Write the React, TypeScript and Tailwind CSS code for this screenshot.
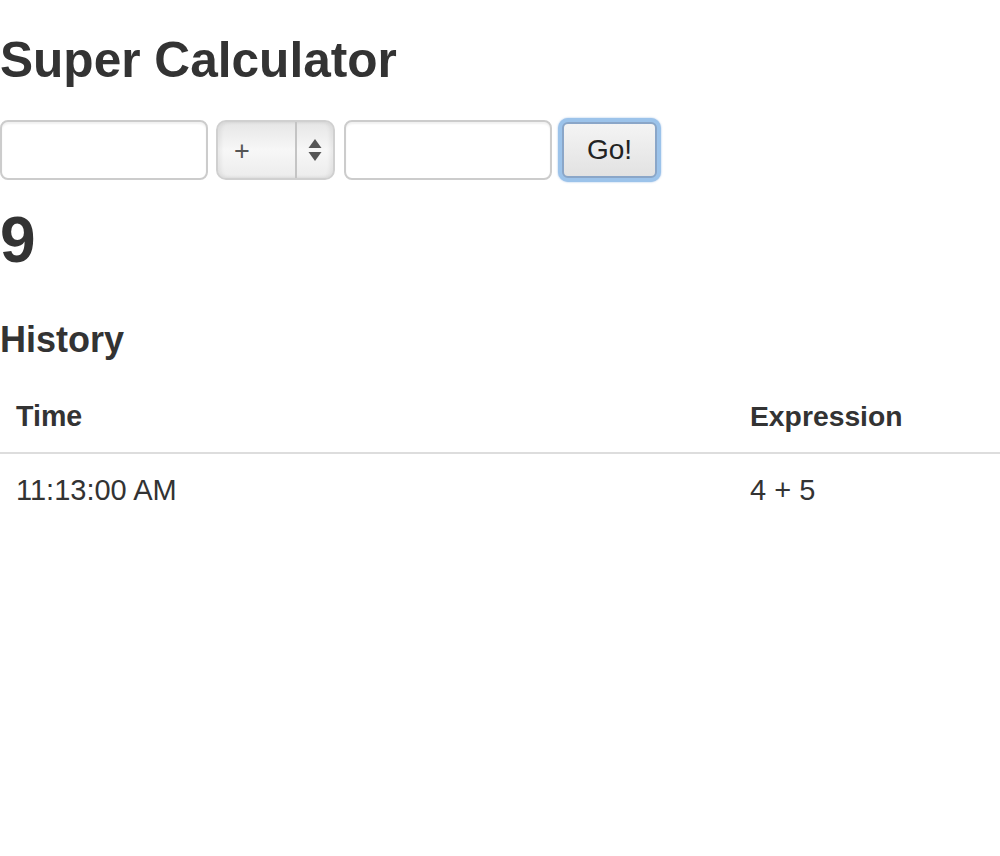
import React from 'react'

const history = [
  { time: '11:13:00 AM', expression: '4 + 5' }
]

export default function App() {
  return (
    <div className="min-h-[856px] w-[1000px] bg-white text-[#333] font-['Liberation_Sans',Arial,sans-serif]">
      {/* Title */}
      <h3 className="pt-[20px] text-[49.6px] leading-[80px] font-bold">Super Calculator</h3>

      {/* Form row */}
      <div className="mt-[20px] flex items-center h-[60px]">
        <div className="w-[208px] h-[60px] rounded-[8px] border-2 border-[#cccccc] bg-white shadow-[inset_0_2px_2px_rgba(0,0,0,0.06)]" />

        <div className="ml-[8px] w-[119px] h-[60px] rounded-[10px] border-2 border-[#d0d0d0] bg-gradient-to-b from-[#e6e6e6] via-[#f7f7f7] to-[#ececec] flex overflow-hidden shadow-[inset_3px_0_4px_rgba(0,0,0,0.06),inset_-3px_0_4px_rgba(0,0,0,0.06)]">
          <div className="flex-1 flex items-center pl-[16px] pt-[2px] text-[27px] font-light text-[#555]">+</div>
          <div className="w-[2px] bg-[#c4c4c4]" />
          <div className="w-[36px] flex items-center justify-center">
            <svg width="16" height="28" viewBox="0 0 16 28">
              <path d="M8 3 L14.5 12 L1.5 12 Z" fill="#555" />
              <path d="M1.5 16 L14.5 16 L8 25 Z" fill="#555" />
            </svg>
          </div>
        </div>

        <div className="ml-[9px] w-[208px] h-[60px] rounded-[8px] border-2 border-[#cccccc] bg-white shadow-[inset_0_2px_2px_rgba(0,0,0,0.06)]" />

        <div className="ml-[6px] w-[103px] h-[64px] rounded-[10px] bg-[#9cc3ea] p-[4px] shadow-[0_0_2px_rgba(80,140,210,0.6)]">
          <button className="w-full h-full rounded-[6px] border-2 border-[#8aa6c8] bg-gradient-to-b from-[#f4f4f4] to-[#e2e2e2] text-[28px] text-[#222] leading-none">
            Go!
          </button>
        </div>
      </div>

      {/* Result */}
      <h2 className="mt-[20px] text-[64px] leading-[80px] font-bold">9</h2>

      {/* History */}
      <h4 className="mt-[40px] text-[36px] leading-[40px] font-bold">History</h4>

      <table className="mt-[20px] w-[1000px] border-collapse leading-[40px]">
        <thead>
          <tr>
            <th className="w-[734px] px-[16px] py-[16px] text-left text-[28.6px] font-bold">Time</th>
            <th className="px-[16px] py-[16px] text-left text-[28.3px] font-bold">Expression</th>
          </tr>
        </thead>
        <tbody>
          {history.map((row) => (
            <tr key={row.time} className="border-t-2 border-[#dddddd]">
              <td className="px-[16px] py-[16px] text-[29px]">{row.time}</td>
              <td className="px-[16px] py-[16px] text-[29px]">{row.expression}</td>
            </tr>
          ))}
        </tbody>
      </table>
    </div>
  )
}
